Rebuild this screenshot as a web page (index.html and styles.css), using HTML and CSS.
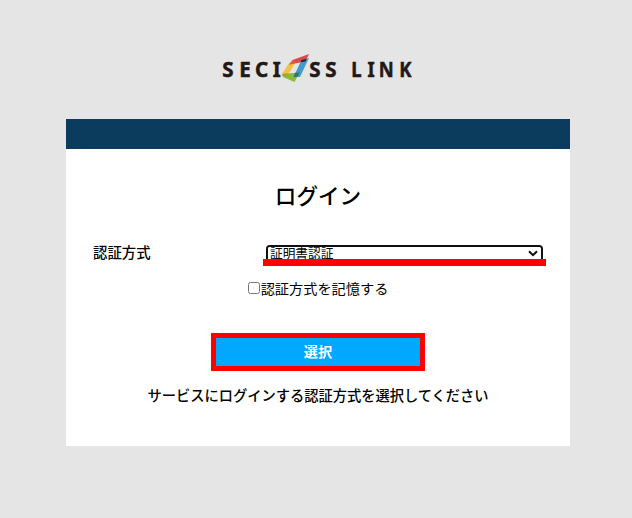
FILE: index.html
```html
<!DOCTYPE html>
<html lang="ja">
<head>
    <meta charset="UTF-8">
    <meta name="viewport" content="width=device-width, initial-scale=1.0">
    <title>SECIOSS LINK</title>
    <link rel="stylesheet" href="styles.css">
</head>
<body>

    <div class="logo">
        <svg width="204" height="44" viewBox="0 0 204 44">
            <g class="logo-text">
                <text y="31" x="6.2 23.2 38.9 56.7">SECI</text>
                <text y="31" x="93.2 109.2">SS</text>
                <text y="31" x="150.4 168.3 180.8 203.6" transform="scale(0.9 1)">LINK</text>
            </g>
            <g class="logo-mark">
                <path fill="#f2c04c" d="M73 17 L79 17.5 L71.5 29.5 L66 28z"/>
                <path fill="#8cb83c" d="M66 28 L83.5 26.5 L78.5 36 L67 31z"/>
                <path fill="#dc4a48" d="M76.5 14 L93 8 L89.5 15.5 L73.5 18.5z"/>
                <path fill="#429ccb" d="M85.5 14 L93 12 L84 31 L77.5 31z"/>
                <path fill="#2b2730" d="M85.5 14 L90.5 12.7 L89.5 15.5 L84.5 16.3z"/>
                <path fill="#d9653a" d="M74.5 16 L80 15.5 L78.8 17.5 L73.5 18.5z"/>
                <path fill="#2c7a62" d="M79.3 26.8 L83.5 26.5 L81.5 30.8 L77.5 31z"/>
                <path fill="#a7a32b" d="M66 28 L72.5 27.5 L71 30 L66.5 29.5z"/>
            </g>
        </svg>
    </div>

    <div class="login-box">
        <div class="login-bar"></div>
        <form class="login-form">
            <h1>ログイン</h1>

            <div class="form-row">
                <label for="auth-method">認証方式</label>
                <div class="select-mark">
                    <div class="select-frame">
                        <select id="auth-method" name="auth-method">
                            <option value="cert">証明書認証</option>
                        </select>
                    </div>
                    <svg class="arrow" width="10" height="7" viewBox="0 0 10 7">
                        <path d="M1 1.2 L5 5.2 L9 1.2" fill="none" stroke="#101010" stroke-width="2"/>
                    </svg>
                </div>
            </div>

            <label class="remember">
                <input type="checkbox" name="remember">認証方式を記憶する
            </label>

            <button type="button" class="submit-btn">選択</button>

            <p class="message">サービスにログインする認証方式を選択してください</p>
        </form>
    </div>

</body>
</html>
```

FILE: styles.css
```css
body {
    font-family: "Noto Sans CJK JP", sans-serif;
    font-size: 14px;
    background-color: #e5e5e5;
    color: #000;
    margin: 0;
    padding: 46px 0 0;
}

.logo {
    width: 204px;
    height: 44px;
    margin: 0 0 29px 216px;
}

.logo svg {
    display: block;
}

.logo-text {
    font-family: "Noto Sans", sans-serif;
    font-size: 20.5px;
    font-weight: 700;
    fill: #231815;
    stroke: #231815;
    stroke-width: 0.5px;
}

.login-box {
    width: 504px;
    height: 327px;
    margin-left: 66px;
    background-color: #fff;
}

.login-bar {
    height: 30px;
    background-color: #0b3c5d;
}

.login-form {
    display: flex;
    flex-direction: column;
    align-items: center;
    padding: 30px 27px 0;
}

h1 {
    margin: 0;
    font-size: 21.6px;
    line-height: 32px;
    font-weight: 500;
}

.form-row {
    display: flex;
    align-self: stretch;
    justify-content: space-between;
    margin: 32px -3px 0 0;
    height: 24px;
}

.form-row label {
    font-size: 14.4px;
    line-height: 18px;
    font-weight: 500;
}

.select-mark {
    position: relative;
    box-sizing: border-box;
    width: 283px;
    height: 23px;
    padding: 2px 3px 0;
    border-bottom: 7px solid #f00;
}

.select-frame {
    box-sizing: border-box;
    width: 277px;
    height: 14px;
    border: 2px solid #101010;
    border-bottom: none;
    border-radius: 4px 4px 0 0;
    overflow: hidden;
}

select {
    display: block;
    appearance: none;
    box-sizing: border-box;
    width: 100%;
    height: 20px;
    margin: -5px 0 0;
    padding: 0 2px;
    border: none;
    outline: none;
    background-color: #fff;
    color: #000;
    font-family: "Noto Sans CJK JP", sans-serif;
    font-size: 12.7px;
}

.arrow {
    position: absolute;
    right: 8px;
    top: 7px;
}

.remember {
    display: flex;
    align-items: center;
    height: 20px;
    margin-top: 11px;
    font-size: 14.2px;
    line-height: 18px;
}

.remember input {
    width: 12px;
    height: 12px;
    margin: 0 1px 0 0;
}

.submit-btn {
    box-sizing: border-box;
    width: 214px;
    height: 38px;
    margin-top: 35px;
    padding: 0 0 2px;
    border: 5px solid #f00;
    background-color: #00a8ff;
    color: #fff;
    font-family: "Noto Sans CJK JP", sans-serif;
    font-size: 14.2px;
    font-weight: 700;
    line-height: 26px;
}

.message {
    margin: 14px 0 0;
    font-size: 14.25px;
    line-height: 20px;
    font-weight: 500;
    white-space: nowrap;
}
```
